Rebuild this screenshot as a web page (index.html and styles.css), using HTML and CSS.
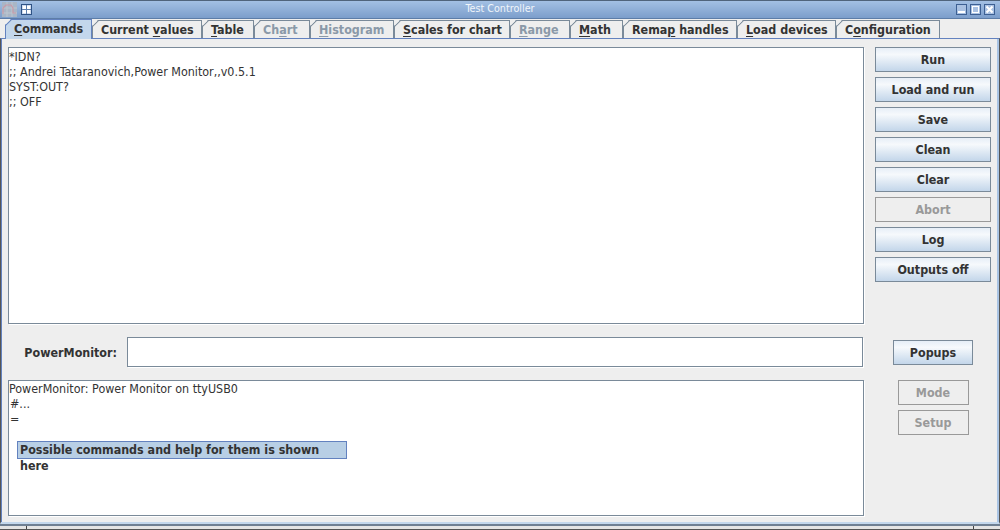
FILE: index.html
```html
<!DOCTYPE html>
<html lang="en">
<head>
<meta charset="utf-8">
<title>Test Controller</title>
<link rel="stylesheet" href="styles.css">
</head>
<body>
<div class="window">
  <header class="titlebar">
    <div class="title-left">
      <svg class="app-icon" width="15" height="15" viewBox="0 0 15 15">
        <rect width="15" height="15" fill="#a9b6c6"/>
        <path d="M0 11H15M0 6H15M5 0V15M10 0V15" stroke="#bcc6d0" stroke-width="1"/>
        <path d="M1 12V6L4 3H9L11 6V11H14" fill="none" stroke="#c99aa8" stroke-width="1.2"/>
      </svg>
      <svg class="wm-icon" width="11" height="11" viewBox="0 0 11 11">
        <rect x=".5" y=".5" width="10" height="10" fill="#cfdcf0" stroke="#2f5385"/>
        <path d="M2 2h3v3H2zM6 2h3v3H6zM2 6h3v3H2zM6 6h3v3H6z" fill="#fff"/>
        <path d="M5.5 1V10M1 5.5H10" stroke="#5d7fae"/>
      </svg>
    </div>
    <span class="title-text">Test Controller</span>
    <div class="title-right">
      <svg width="11" height="11" viewBox="0 0 11 11">
        <rect x=".5" y=".5" width="10" height="10" fill="#a9c1e2" stroke="#3d6093"/>
        <rect x="2" y="7" width="7" height="2" fill="#fff"/>
      </svg>
      <svg width="11" height="11" viewBox="0 0 11 11">
        <rect x=".5" y=".5" width="10" height="10" fill="#a9c1e2" stroke="#3d6093"/>
        <rect x="2.5" y="2.5" width="6" height="6" fill="none" stroke="#fff"/>
      </svg>
      <svg width="11" height="11" viewBox="0 0 11 11">
        <rect x=".5" y=".5" width="10" height="10" fill="#a9c1e2" stroke="#3d6093"/>
        <path d="M2.5 2.5L8.5 8.5M8.5 2.5L2.5 8.5" stroke="#fff" stroke-width="2"/>
      </svg>
    </div>
  </header>

  <nav class="tabs">
    <div class="tab selected tab-commands"><span><u>C</u>ommands</span></div>
    <div class="tab tab-current"><span>Current <u>v</u>alues</span></div>
    <div class="tab tab-table"><span><u>T</u>able</span></div>
    <div class="tab disabled tab-chart"><span>Ch<u>a</u>rt</span></div>
    <div class="tab disabled tab-hist"><span><u>H</u>istogram</span></div>
    <div class="tab tab-scales"><span><u>S</u>cales for chart</span></div>
    <div class="tab disabled tab-range"><span><u>R</u>ange</span></div>
    <div class="tab tab-math"><span><u>M</u>ath</span></div>
    <div class="tab tab-remap"><span>Rema<u>p</u> handles</span></div>
    <div class="tab tab-load"><span><u>L</u>oad devices</span></div>
    <div class="tab tab-config"><span>C<u>o</u>nfiguration</span></div>
  </nav>

  <main class="panel">
    <section class="left">
      <div class="textbox commands">*IDN?
;; Andrei Tataranovich,Power Monitor,,v0.5.1
SYST:OUT?
;; OFF</div>
      <div class="field-row">
        <label class="field-label">PowerMonitor:</label>
        <div class="field"></div>
      </div>
      <div class="textbox output">
        <div class="out-first">PowerMonitor: Power Monitor on ttyUSB0</div>
        <div class="out-line">#...</div>
        <div class="out-line">=</div>
        <div class="help-label">Possible commands and help for them is shown here</div>
      </div>
    </section>
    <aside class="right">
      <div class="btn-stack">
        <button class="btn">Run</button>
        <button class="btn">Load and run</button>
        <button class="btn">Save</button>
        <button class="btn">Clean</button>
        <button class="btn">Clear</button>
        <button class="btn off">Abort</button>
        <button class="btn">Log</button>
        <button class="btn">Outputs off</button>
      </div>
      <button class="btn popups">Popups</button>
      <button class="btn off small first-small">Mode</button>
      <button class="btn off small">Setup</button>
    </aside>
  </main>

  <footer class="resize">
    <i class="tick"></i>
    <i class="tick"></i>
  </footer>
</div>
</body>
</html>
```

FILE: styles.css
```css
* { box-sizing: border-box; }
html, body { margin: 0; padding: 0; }
body {
  width: 1000px;
  height: 530px;
  overflow: hidden;
  background: #eeeeee;
  font-family: "DejaVu Sans Condensed", "DejaVu Sans", sans-serif;
  font-stretch: condensed;
  color: #333333;
}
.window { width: 1000px; height: 530px; display: flex; flex-direction: column; }

.titlebar {
  height: 19px;
  flex: none;
  display: flex;
  align-items: center;
  justify-content: space-between;
  position: relative;
  padding: 0 5px 0 2px;
  background: linear-gradient(#a3c0e4, #7c9ecb);
  border-top: 1px solid #50647c;
  border-bottom: 1px solid #5d7da8;
}
.title-left { display: flex; align-items: center; gap: 4px; }
.title-right { display: flex; align-items: center; gap: 3px; }
.titlebar svg { display: block; }
.title-text {
  position: absolute;
  left: 0; right: 0;
  top: 1px;
  text-align: center;
  color: #f1f5fa;
  font-size: 10.7px;
  line-height: 13px;
}

.tabs {
  height: 19px;
  flex: none;
  display: flex;
  padding-left: 5px;
  background: #eeeeee;
}
.tab {
  position: relative;
  height: 18px;
  border: 1px solid #7a8a99;
  border-bottom: none;
  margin-top: 1px;
  background: #eeeeee;
  font-size: 12.4px;
  font-weight: bold;
  line-height: 17px;
  padding-left: 8px;
  white-space: nowrap;
  clip-path: polygon(6px 0, 100% 0, 100% 100%, 0 100%, 0 6px);
}
.tab::before {
  content: "";
  position: absolute;
  left: -2px;
  top: 2px;
  width: 9px;
  height: 1px;
  background: #7a8a99;
  transform: rotate(-45deg);
}
.tab u { text-decoration-thickness: 1px; text-underline-offset: 2px; }
.selected { background: #c3d7ec; border-color: #6382bf; margin-top: 0; height: 20px; z-index: 1; }
.selected::before { background: #6382bf; }
.disabled { color: #8a99a8; }
.tab-commands { width: 87px; }
.tab-current { width: 110px; }
.tab-table { width: 52px; }
.tab-chart { width: 56px; }
.tab-hist { width: 84px; }
.tab-scales { width: 116px; }
.tab-range { width: 60px; }
.tab-math { width: 53px; }
.tab-remap { width: 114px; }
.tab-load { width: 99px; }
.tab-config { width: 104px; }

.panel {
  height: 486px;
  flex: none;
  display: flex;
  background: #eeeeee;
  border-top: 1px solid #6382bf;
  border-left: 1px solid #555555;
  border-right: 1px solid #555555;
  border-bottom: 2px solid #c3d7ec;
  box-shadow: inset 1px 0 0 #6382bf, inset -2px 0 0 #a9c4e4;
  padding: 8px 8px 0 7px;
  gap: 11px;
}

.left { width: 856px; flex: none; display: flex; flex-direction: column; }
.textbox {
  background: #ffffff;
  border: 1px solid #7a8a99;
  color: #333333;
  font-size: 12.4px;
  line-height: 15px;
  box-shadow: 1px 1px 0 #fff;
}
.commands { height: 277px; padding-top: 1px; white-space: pre; }
.field-row { height: 56px; flex: none; display: flex; align-items: center; }
.field-label {
  width: 119px;
  flex: none;
  text-align: right;
  padding-right: 10px;
  font-size: 12.4px;
  font-weight: bold;
}
.field {
  width: 736px;
  height: 30px;
  background: #ffffff;
  border: 1px solid #7a8a99;
  box-shadow: 1px 1px 0 #fff;
}
.output { height: 136px; padding-top: 0; }
.out-first { height: 15px; }
.out-line { height: 14.5px; padding-left: 1px; }
.help-label {
  width: 330px;
  height: 18px;
  margin: 16px 0 0 8px;
  background: #b8cfe5;
  border: 1px solid #6382bf;
  font-size: 12.4px;
  font-weight: bold;
  line-height: 16px;
  padding-left: 2px;
}

.right {
  width: 116px;
  flex: none;
  display: flex;
  flex-direction: column;
  align-items: center;
}
.btn-stack { display: flex; flex-direction: column; gap: 5px; width: 116px; }
.btn {
  display: block;
  width: 116px;
  height: 25px;
  padding: 0;
  margin: 0;
  border: 1px solid #7a8a99;
  border-radius: 0;
  background: linear-gradient(#e6eef7 0%, #f6f9fc 28%, #c3d6ea 100%);
  color: #333333;
  font-family: "DejaVu Sans Condensed", "DejaVu Sans", sans-serif;
  font-stretch: condensed;
  font-size: 12.4px;
  font-weight: bold;
  text-align: center;
}
.btn.off { background: #eeeeee; border-color: #999999; color: #999999; }
.btn.popups { width: 80px; margin-top: 58px; }
.btn.small { width: 71px; margin-top: 5px; }
.btn.first-small { margin-top: 15px; }

.resize {
  height: 6px;
  flex: none;
  background: #e4e4e4;
  border-top: 2px solid #6f7f92;
  border-bottom: 1px solid #555555;
  padding: 0 26px;
  display: flex;
  justify-content: space-between;
}
.tick { display: block; width: 1px; height: 3px; background: #444444; }
```
